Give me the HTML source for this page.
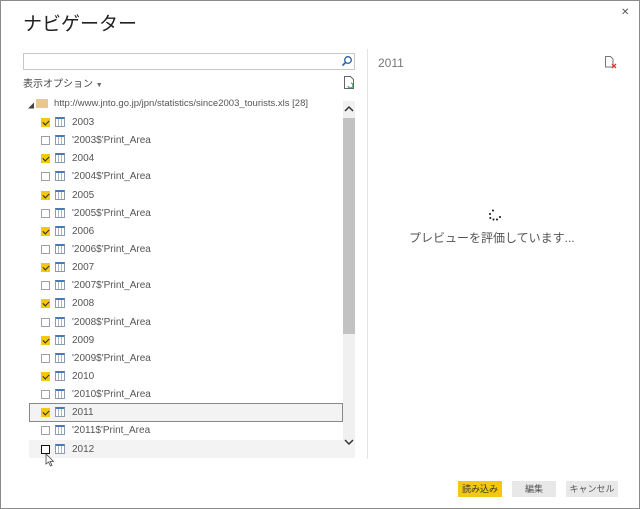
<!DOCTYPE html><html><head><meta charset="utf-8"><style>
*{margin:0;padding:0;box-sizing:border-box}
body{width:640px;height:509px;background:#fff;font-family:"Liberation Sans","Noto Sans CJK JP",sans-serif;position:relative;overflow:hidden;border:1px solid #8a8a8a;color:#333}
.a{position:absolute}
.row{position:absolute;left:28px;width:314px;height:18px;font-size:10px;color:#555;line-height:18px}
.cb{position:absolute;left:12px;top:5px;width:9px;height:9px;border:1px solid #a0a0a0;background:#fff}
.cb.on{background:#f2c811;border-color:#f2c811}
.cb.on:after{content:"";position:absolute;left:2px;top:0px;width:3px;height:5px;border:solid #222;border-width:0 1.3px 1.3px 0;transform:rotate(45deg)}
.tb{position:absolute;left:26px;top:4px;width:10px;height:10px;border:1px solid #8a9ab0;border-top:2px solid #4a7ab5;background:repeating-linear-gradient(90deg,transparent 0 2px,#a9b6c6 2px 3px),#fff}
.tx{position:absolute;left:43px;top:1px}
.btn{position:absolute;top:480px;height:16px;font-size:9px;text-align:center;line-height:16px;background:#e8e8e8;color:#555}
</style></head><body>
<div class="a" style="left:22px;top:8px;font-size:19px;color:#222">ナビゲーター</div>
<div class="a" style="left:620px;top:6px;font-size:10px;color:#555">✕</div>
<div class="a" style="left:22px;top:52px;width:332px;height:17px;border:1px solid #c8c8c8"></div>
<svg class="a" style="left:340px;top:54px" width="12" height="12"><circle cx="7" cy="5" r="3.3" fill="none" stroke="#2a5fa5" stroke-width="1.3"/><line x1="4.5" y1="7.5" x2="1.5" y2="10.5" stroke="#2a5fa5" stroke-width="1.6"/></svg>
<div class="a" style="left:22px;top:74px;font-size:10px;color:#444">表示オプション <span style="font-size:7px;color:#666">▼</span></div>
<svg class="a" style="left:342px;top:75px" width="12" height="14"><path d="M1.5 .5h6l3 3v9h-9z" fill="#fff" stroke="#666"/><path d="M5 10a2.5 2.5 0 1 0 3-3" fill="none" stroke="#2a9a4a"/></svg>
<div class="a" style="left:27px;top:100px;font-size:6px;color:#444">◢</div>
<div class="a" style="left:35px;top:98px;width:12px;height:9px;background:#e8c98a"></div>
<div class="a" style="left:53px;top:97px;font-size:9.5px;color:#555">http://www.jnto.go.jp/jpn/statistics/since2003_tourists.xls [28]</div>
<div class="a" style="left:342px;top:100px;width:12px;height:357px;background:#f0f0f0"></div>
<div class="a" style="left:342px;top:117px;width:12px;height:216px;background:#c2c2c2"></div>
<svg class="a" style="left:343px;top:104px" width="10" height="8"><path d="M1 6l4-4 4 4" fill="none" stroke="#333" stroke-width="1.5"/></svg>
<div class="a" style="left:28px;top:439px;width:326px;height:18px;background:#f3f3f3"></div>
<svg class="a" style="left:343px;top:437px" width="10" height="8"><path d="M1 2l4 4 4-4" fill="none" stroke="#333" stroke-width="1.5"/></svg>
<div class="a" style="left:28px;top:402px;width:314px;height:19px;border:1px solid #888;background:#f3f3f3"></div>
<div class="row" style="top:112px"><div class="cb on"></div><div class="tb"></div><div class="tx">2003</div></div>
<div class="row" style="top:130px"><div class="cb"></div><div class="tb"></div><div class="tx">'2003$'Print_Area</div></div>
<div class="row" style="top:148px"><div class="cb on"></div><div class="tb"></div><div class="tx">2004</div></div>
<div class="row" style="top:166px"><div class="cb"></div><div class="tb"></div><div class="tx">'2004$'Print_Area</div></div>
<div class="row" style="top:185px"><div class="cb on"></div><div class="tb"></div><div class="tx">2005</div></div>
<div class="row" style="top:203px"><div class="cb"></div><div class="tb"></div><div class="tx">'2005$'Print_Area</div></div>
<div class="row" style="top:221px"><div class="cb on"></div><div class="tb"></div><div class="tx">2006</div></div>
<div class="row" style="top:239px"><div class="cb"></div><div class="tb"></div><div class="tx">'2006$'Print_Area</div></div>
<div class="row" style="top:257px"><div class="cb on"></div><div class="tb"></div><div class="tx">2007</div></div>
<div class="row" style="top:275px"><div class="cb"></div><div class="tb"></div><div class="tx">'2007$'Print_Area</div></div>
<div class="row" style="top:293px"><div class="cb on"></div><div class="tb"></div><div class="tx">2008</div></div>
<div class="row" style="top:312px"><div class="cb"></div><div class="tb"></div><div class="tx">'2008$'Print_Area</div></div>
<div class="row" style="top:330px"><div class="cb on"></div><div class="tb"></div><div class="tx">2009</div></div>
<div class="row" style="top:348px"><div class="cb"></div><div class="tb"></div><div class="tx">'2009$'Print_Area</div></div>
<div class="row" style="top:366px"><div class="cb on"></div><div class="tb"></div><div class="tx">2010</div></div>
<div class="row" style="top:384px"><div class="cb"></div><div class="tb"></div><div class="tx">'2010$'Print_Area</div></div>
<div class="row" style="top:402px"><div class="cb on"></div><div class="tb"></div><div class="tx">2011</div></div>
<div class="row" style="top:420px"><div class="cb"></div><div class="tb"></div><div class="tx">'2011$'Print_Area</div></div>
<div class="row" style="top:439px"><div class="cb" style="border-color:#111;border-width:1.3px"></div><div class="tb"></div><div class="tx">2012</div></div>
<svg class="a" style="left:44px;top:452px" width="10" height="14"><path d="M1 1v10l2.5-2 2 4 1.5-.8-2-3.8h3.5z" fill="#fff" stroke="#444" stroke-width=".8"/></svg>
<div class="a" style="left:366px;top:48px;width:1px;height:410px;background:#e4e4e4"></div>
<div class="a" style="left:377px;top:55px;font-size:12px;color:#777">2011</div>
<svg class="a" style="left:603px;top:55px" width="14" height="14"><path d="M1.5 .5h5l2.5 2.5v8h-7.5z" fill="#fff" stroke="#777"/><path d="M8 8l4 4M12 8l-4 4" stroke="#d33" stroke-width="1.3"/></svg>
<svg class="a" style="left:488px;top:208px" width="18" height="18"><g fill="#111"><circle cx="4" cy="1.5" r="1"/><circle cx="1" cy="5" r="1"/><circle cx="1.3" cy="9" r="1"/><circle cx="4.5" cy="10.5" r="1"/><circle cx="8" cy="10.5" r="1"/><circle cx="11" cy="8" r="1"/></g></svg>
<div class="a" style="left:408px;top:228px;font-size:12px;color:#555">プレビューを評価しています...</div>
<div class="btn" style="left:457px;width:44px;background:#f2c811;color:#333">読み込み</div>
<div class="btn" style="left:511px;width:44px">編集</div>
<div class="btn" style="left:565px;width:52px">キャンセル</div>
</body></html>
